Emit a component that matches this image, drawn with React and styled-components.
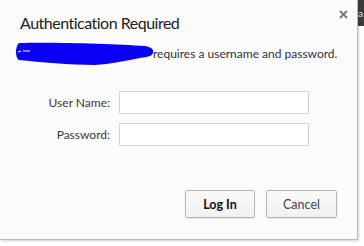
import React from "react";
import styled, { createGlobalStyle } from "styled-components";

const Global = createGlobalStyle`
  html, body { margin: 0; padding: 0; background: #ffffff; }
  body { font-family: Lato, "Open Sans", sans-serif; }
`;

const Page = styled.div`
  display: flex;
  width: 364px;
  height: 246px;
  overflow: hidden;
  background: #ffffff;
`;

const Dialog = styled.div`
  position: relative;
  flex: 0 0 auto;
  width: 358px;
  height: 240px;
  box-sizing: border-box;
  background: #fbfbfb;
  border-right: 1px solid #b9b9b9;
  border-bottom: 1px solid #b9b9b9;
  box-shadow: 1px 1px 2px rgba(0, 0, 0, 0.18);
  display: flex;
  flex-direction: column;
  color: #303030;
`;

const Side = styled.div`
  flex: 1 1 auto;
  display: flex;
  flex-direction: column;
`;

const SideTab = styled.div`
  height: 26px;
  background: #3c3c3c;
  color: #e8e8e8;
  font: 10px Lato, sans-serif;
  line-height: 26px;
  padding-left: 0;
  overflow: hidden;
  white-space: nowrap;
`;

const Close = styled.button`
  position: absolute;
  top: 8px;
  right: 8px;
  width: 12px;
  height: 12px;
  padding: 0;
  border: 0;
  background: none;
  display: flex;
  align-items: center;
  justify-content: center;
`;

const Title = styled.h1`
  margin: 12px 0 0 20px;
  font: 400 16px Lato, sans-serif;
  letter-spacing: -0.5px;
  line-height: 22px;
  color: #222222;
`;

const Message = styled.div`
  display: flex;
  align-items: center;
  margin: 6px 0 0 15px;
  height: 26px;
  font-size: 12px;
  color: #33303a;
`;

const Scribble = styled.svg`
  flex: 0 0 auto;
  width: 138px;
  height: 26px;
  display: block;
`;

const Form = styled.div`
  display: grid;
  grid-template-columns: 110px 190px;
  column-gap: 9px;
  row-gap: 9px;
  margin-top: 25px;
  align-items: center;
`;

const Label = styled.label`
  text-align: right;
  font-size: 12px;
  color: #3a3a3a;
`;

const Input = styled.input`
  box-sizing: border-box;
  width: 190px;
  height: 23px;
  border: 1px solid #d4d4d4;
  background: #ffffff;
  margin: 0;
  padding: 0 4px;
  font: 12px Lato, sans-serif;
  outline: none;
`;

const Buttons = styled.div`
  display: flex;
  justify-content: flex-end;
  gap: 11px;
  margin-top: auto;
  margin-bottom: 21px;
  padding-right: 20px;
`;

const Button = styled.button`
  box-sizing: border-box;
  width: ${(p) => (p.$primary ? 70 : 71)}px;
  height: 28px;
  border: 1px solid #b3b3b3;
  border-radius: 2px;
  background: linear-gradient(#fafafa, #f1f1f1);
  box-shadow: 0 1px 1px rgba(0, 0, 0, 0.08);
  font: ${(p) => (p.$primary ? 700 : 400)} 12.5px Lato, sans-serif;
  color: ${(p) => (p.$primary ? "#111111" : "#444444")};
  padding: 0;
`;

export default function App() {
  return (
    <>
      <Global />
      <Page>
        <Dialog>
          <Close aria-label="Close">
            <svg width="9" height="9" viewBox="0 0 9 9">
              <path d="M1 1L8 8M8 1L1 8" stroke="#7a7a7a" strokeWidth="2" />
            </svg>
          </Close>
          <Title>Authentication Required</Title>
          <Message>
            <Scribble viewBox="0 0 138 26">
              <path
                d="M4 3 C40 2 100 4 130 6 C137 7 139 10 138 13 C137 16 133 17 125 18 C110 21 95 24 80 25 C55 25 25 22 4 20 C0 18 0 6 4 3 Z"
                fill="#0a00f5"
              />
              <path d="M3 12 L6 11 M8 11 L15 11" stroke="#ffffff" strokeWidth="1" />
            </Scribble>
            <span>requires a username and password.</span>
          </Message>
          <Form>
            <Label htmlFor="u">User Name:</Label>
            <Input id="u" />
            <Label htmlFor="p">Password:</Label>
            <Input id="p" type="password" />
          </Form>
          <Buttons>
            <Button $primary>Log In</Button>
            <Button>Cancel</Button>
          </Buttons>
        </Dialog>
        <Side>
          <SideTab>a</SideTab>
        </Side>
      </Page>
    </>
  );
}
